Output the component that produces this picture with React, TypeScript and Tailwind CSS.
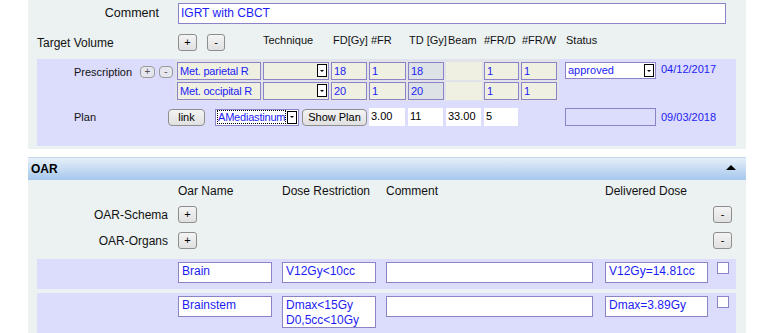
import type { ReactNode } from 'react'

const BLUE = 'text-[#1c1cf5]'

function SqBtn({ children, className = '' }: { children: ReactNode; className?: string }) {
  return (
    <div className={`flex h-[17px] items-center justify-center rounded-[3px] border border-[#8e8e8e] bg-linear-to-b from-[#f4f4f4] to-[#e0e0e0] leading-none text-black ${className}`}>
      {children}
    </div>
  )
}

function Arrow({ className = '' }: { className?: string }) {
  return (
    <span className={`flex h-[13px] w-[10px] shrink-0 items-center justify-center border border-black bg-white ${className}`}>
      <span className="h-0 w-0 border-x-[2px] border-t-[2px] border-x-transparent border-t-black" />
    </span>
  )
}

function Cell({ w, children, tone = 'beige', border = true }: { w: string; children?: ReactNode; tone?: 'beige' | 'gray'; border?: boolean }) {
  return (
    <div
      className={`${w} h-[18px] overflow-hidden whitespace-nowrap px-[2px] text-[11px] leading-[16px] tracking-[-0.2px] ${BLUE} ${tone === 'gray' ? 'bg-[#dde2e6]' : 'bg-[#efefe2]'} ${border ? 'border border-[#8a84c6]' : 'border border-transparent'}`}
    >
      {children}
    </div>
  )
}

function TechCell() {
  return (
    <div className="flex h-[18px] w-[66px] items-end justify-end border border-[#8a84c6] bg-[#efefe2] pb-[2px] pr-[1px]">
      <Arrow />
    </div>
  )
}

function PlanInput({ w, value, className = '' }: { w: string; value: string; className?: string }) {
  return <div className={`${w} h-[18px] bg-white px-[2px] text-[11px] leading-[16px] text-black ${className}`}>{value}</div>
}

function OarRow({ name, restriction, delivered, tall }: { name: string; restriction: string[]; delivered: string; tall?: boolean }) {
  const box = `border border-[#8a84c6] bg-white px-[3px] text-[12px] ${BLUE}`
  return (
    <div className={`ml-[9px] flex w-[699px] items-start bg-[#dcdcfc] pl-[141px] pt-[3px] ${tall ? 'mt-[4px] h-[44px]' : 'mt-[10px] h-[30px]'}`}>
      <div className={`h-[21px] w-[94px] leading-[17px] ${box}`}>{name}</div>
      <div className={`ml-[10px] w-[94px] leading-[15px] ${restriction.length > 1 ? 'h-[32px] pt-[1px]' : 'h-[21px] pt-[1px]'} ${box}`}>
        {restriction.map(r => (
          <div key={r}>{r}</div>
        ))}
      </div>
      <div className={`ml-[10px] h-[21px] w-[207px] ${box}`} />
      <div className={`ml-[12px] h-[21px] w-[103px] leading-[17px] ${box}`}>{delivered}</div>
      <div className="ml-[9px] h-[12px] w-[12px] border border-[#8a84c6] bg-white" />
    </div>
  )
}

export default function App() {
  return (
    <div className="h-[333px] w-[776px] overflow-hidden bg-white font-['Liberation_Sans',Arial,sans-serif] text-[#111]">
      {/* Target volume panel */}
      <div className="ml-[28px] w-[718px] bg-[#ecf1f1] pb-[3px] pt-[3px]">
        <div className="flex items-center">
          <div className="w-[150px] pr-[19px] text-right text-[12.5px]">Comment</div>
          <div className={`h-[21px] w-[548px] border border-[#8a84c6] bg-white px-[2px] text-[12px] leading-[19px] ${BLUE}`}>IGRT with CBCT</div>
        </div>

        <div className="mt-[10px] flex h-[17px] items-center">
          <div className="w-[150px] pl-[9px] text-[12px]">Target Volume</div>
          <SqBtn className="w-[19px] text-[11px]">+</SqBtn>
          <SqBtn className="ml-[10px] w-[18px] text-[11px]">-</SqBtn>
          <div className="mb-[5px] ml-[38px] flex text-[11px]">
            <span className="w-[70px]">Technique</span>
            <span className="w-[38px]">FD[Gy]</span>
            <span className="w-[38px]">#FR</span>
            <span className="w-[39px]">TD [Gy]</span>
            <span className="w-[36px]">Beam</span>
            <span className="w-[38px]">#FR/D</span>
            <span className="w-[44px]">#FR/W</span>
            <span>Status</span>
          </div>
        </div>

        <div className="ml-[9px] mt-[8px] h-[87px] w-[699px] bg-[#dcdcfc]">
          {/* Prescription rows */}
          <div className="flex items-start">
            <div className="w-[103px] pl-[37px] pt-[6px] text-[11px] leading-[14px]">Prescription</div>
            <div className="mt-[7px] flex h-[12px] w-[15px] items-center justify-center rounded-[4px] border border-[#9a9a9a] bg-[#e6e6ee] text-[10px] leading-none text-[#555]">+</div>
            <div className="ml-[4px] mt-[7px] flex h-[12px] w-[14px] items-center justify-center rounded-[4px] border border-[#9a9a9a] bg-[#e6e6ee] text-[10px] leading-none text-[#555]">-</div>
            <div className="ml-[2px] flex flex-col gap-[2px] bg-[#e2e2ea] px-[2px] pb-[1px] pt-[3px]">
              {[
                ['Met. parietal R', '18', '1', '18', '1', '1'],
                ['Met. occipital R', '20', '1', '20', '1', '1'],
              ].map(r => (
                <div key={r[0]} className="flex gap-[2px]">
                  <Cell w="w-[84px]">{r[0]}</Cell>
                  <TechCell />
                  <Cell w="w-[36px]">{r[1]}</Cell>
                  <Cell w="w-[37px]">{r[2]}</Cell>
                  <Cell w="w-[36px]" tone="gray">{r[3]}</Cell>
                  <Cell w="w-[36px]" border={false} />
                  <Cell w="w-[35px]">{r[4]}</Cell>
                  <Cell w="w-[36px]">{r[5]}</Cell>
                </div>
              ))}
            </div>
            <div className={`ml-[6px] mt-[3px] flex h-[17px] w-[91px] items-center justify-between border border-[#8a84c6] bg-white pl-[2px] pr-[1px] text-[11px] ${BLUE}`}>
              approved
              <Arrow />
            </div>
            <div className={`ml-[5px] mt-[3px] text-[11px] leading-[14px] ${BLUE}`}>04/12/2017</div>
          </div>

          {/* Plan row */}
          <div className="mt-[7px] flex h-[18px] items-center">
            <div className="w-[131px] pl-[37px] text-[11px]">Plan</div>
            <SqBtn className="w-[37px] rounded-[4px] text-[11px]">link</SqBtn>
            <div className={`ml-[10px] flex h-[17px] w-[84px] items-center justify-between border border-[#8a84c6] bg-white pl-[1px] pr-[1px] text-[11px] ${BLUE}`}>
              <span className="overflow-hidden whitespace-nowrap border border-dotted border-black leading-[12px] tracking-[-0.2px]">AMediastinum</span>
              <Arrow />
            </div>
            <SqBtn className="ml-[3px] w-[65px] rounded-[4px] text-[11px]">Show Plan</SqBtn>
            <PlanInput w="w-[36px]" value="3.00" className="ml-[2px]" />
            <PlanInput w="w-[35px]" value="11" className="ml-[3px]" />
            <PlanInput w="w-[35px]" value="33.00" className="ml-[3px]" />
            <PlanInput w="w-[34px]" value="5" className="ml-[3px]" />
            <div className="ml-[47px] h-[18px] w-[91px] border border-[#8a84c6]" />
            <div className={`ml-[5px] text-[11px] ${BLUE}`}>09/03/2018</div>
          </div>
        </div>
      </div>

      {/* OAR panel */}
      <div className="ml-[28px] mt-[8px] w-[718px] bg-[#ecf1f1]">
        <div className="flex h-[23px] items-center justify-between border-t border-[#c2d7ec] bg-linear-to-b from-[#e6eff9] to-[#a5c7ec] pl-[3px] pr-[10px]">
          <span className="text-[12px] font-bold text-black">OAR</span>
          <span className="mb-[3px] h-0 w-0 border-x-[5px] border-b-[5px] border-x-transparent border-b-black" />
        </div>

        <div className="flex h-[22px] items-center pl-[150px] text-[12px]">
          <span className="w-[104px]">Oar Name</span>
          <span className="w-[104px]">Dose Restriction</span>
          <span className="w-[219px]">Comment</span>
          <span>Delivered Dose</span>
        </div>

        {['OAR-Schema', 'OAR-Organs'].map((l, i) => (
          <div key={l} className={`flex h-[17px] items-center ${i === 0 ? 'mt-[4px]' : 'mt-[9px]'}`}>
            <div className="w-[140px] text-right text-[12px]">{l}</div>
            <SqBtn className="ml-[10px] w-[19px] text-[11px]">+</SqBtn>
            <SqBtn className="ml-auto mr-[14px] w-[19px] text-[11px]">-</SqBtn>
          </div>
        ))}

        <OarRow name="Brain" restriction={['V12Gy<10cc']} delivered="V12Gy=14.81cc" />
        <OarRow name="Brainstem" restriction={['Dmax<15Gy', 'D0,5cc<10Gy']} delivered="Dmax=3.89Gy" tall />
      </div>
    </div>
  )
}
